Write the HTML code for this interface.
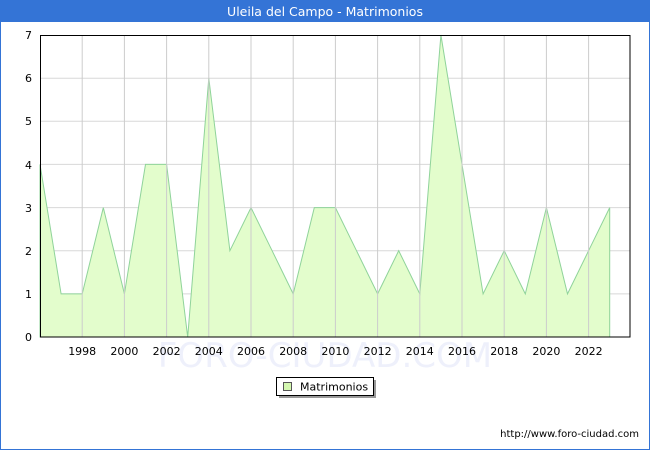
<!DOCTYPE html>
<html><head><meta charset="utf-8"><style>
body{margin:0;width:650px;height:450px;overflow:hidden;font-family:"DejaVu Sans","Liberation Sans",sans-serif;}
</style></head><body>
<svg width="650" height="450" xmlns="http://www.w3.org/2000/svg" font-family="DejaVu Sans, Liberation Sans, sans-serif">
<rect x="0" y="0" width="650" height="450" fill="#fff"/>
<rect x="0.5" y="0.5" width="649" height="449" fill="none" stroke="#3474d6"/>
<rect x="0" y="0" width="650" height="22" fill="#3474d6"/>
<text x="325" y="16" fill="#fff" font-size="12.5" text-anchor="middle">Uleila del Campo - Matrimonios</text>
<text x="325" y="367" fill="#eef0fb" font-size="34" text-anchor="middle">FORO-CIUDAD.COM</text>
<g stroke="#d8d8d8" stroke-width="1">
<line x1="40" y1="293.9" x2="630" y2="293.9"/><line x1="40" y1="250.7" x2="630" y2="250.7"/>
<line x1="40" y1="207.6" x2="630" y2="207.6"/><line x1="40" y1="164.4" x2="630" y2="164.4"/>
<line x1="40" y1="121.3" x2="630" y2="121.3"/><line x1="40" y1="78.2" x2="630" y2="78.2"/>
</g>
<polygon fill="#e3fdcc" stroke="#8fd39a" stroke-width="1" points="40,337 40,164.4 61.1,293.9 82.2,293.9 103.3,207.6 124.4,293.9 145.5,164.4 166.6,164.4 187.7,337 208.8,78.2 229.9,250.7 251,207.6 272.1,250.7 293.2,293.9 314.3,207.6 335.4,207.6 356.5,250.7 377.6,293.9 398.7,250.7 419.8,293.9 440.9,35 462,164.4 483.1,293.9 504.2,250.7 525.3,293.9 546.4,207.6 567.5,293.9 588.6,250.7 609.7,207.6 609.7,337"/>
<g stroke="#cccccc" stroke-width="1">
<line x1="82.2" y1="35" x2="82.2" y2="337"/><line x1="124.4" y1="35" x2="124.4" y2="337"/>
<line x1="166.6" y1="35" x2="166.6" y2="337"/><line x1="208.8" y1="35" x2="208.8" y2="337"/>
<line x1="251" y1="35" x2="251" y2="337"/><line x1="293.2" y1="35" x2="293.2" y2="337"/>
<line x1="335.4" y1="35" x2="335.4" y2="337"/><line x1="377.6" y1="35" x2="377.6" y2="337"/>
<line x1="419.8" y1="35" x2="419.8" y2="337"/><line x1="462" y1="35" x2="462" y2="337"/>
<line x1="504.2" y1="35" x2="504.2" y2="337"/><line x1="546.4" y1="35" x2="546.4" y2="337"/>
<line x1="588.6" y1="35" x2="588.6" y2="337"/>
</g>
<rect x="40.5" y="35.5" width="589.5" height="301.5" fill="none" stroke="#000"/>
<g font-size="11" fill="#000" text-anchor="end">
<text x="32" y="341">0</text><text x="32" y="298">1</text><text x="32" y="255">2</text><text x="32" y="212">3</text>
<text x="32" y="169">4</text><text x="32" y="125">5</text><text x="32" y="82">6</text><text x="32" y="39">7</text>
</g>
<g font-size="11" fill="#000" text-anchor="middle">
<text x="82.2" y="355">1998</text><text x="124.4" y="355">2000</text><text x="166.6" y="355">2002</text>
<text x="208.8" y="355">2004</text><text x="251" y="355">2006</text><text x="293.2" y="355">2008</text>
<text x="335.4" y="355">2010</text><text x="377.6" y="355">2012</text><text x="419.8" y="355">2014</text>
<text x="462" y="355">2016</text><text x="504.2" y="355">2018</text><text x="546.4" y="355">2020</text>
<text x="588.6" y="355">2022</text>
</g>
<rect x="279" y="380" width="97" height="18" fill="#999"/>
<rect x="276.5" y="377.5" width="97" height="18" fill="#fff" stroke="#000"/>
<rect x="283.5" y="382.5" width="8" height="8" fill="#d4f8b0" stroke="#555"/>
<text x="300" y="390.5" font-size="11">Matrimonios</text>
<text x="639" y="437" font-size="10" text-anchor="end">http://www.foro-ciudad.com</text>
</svg>
</body></html>
